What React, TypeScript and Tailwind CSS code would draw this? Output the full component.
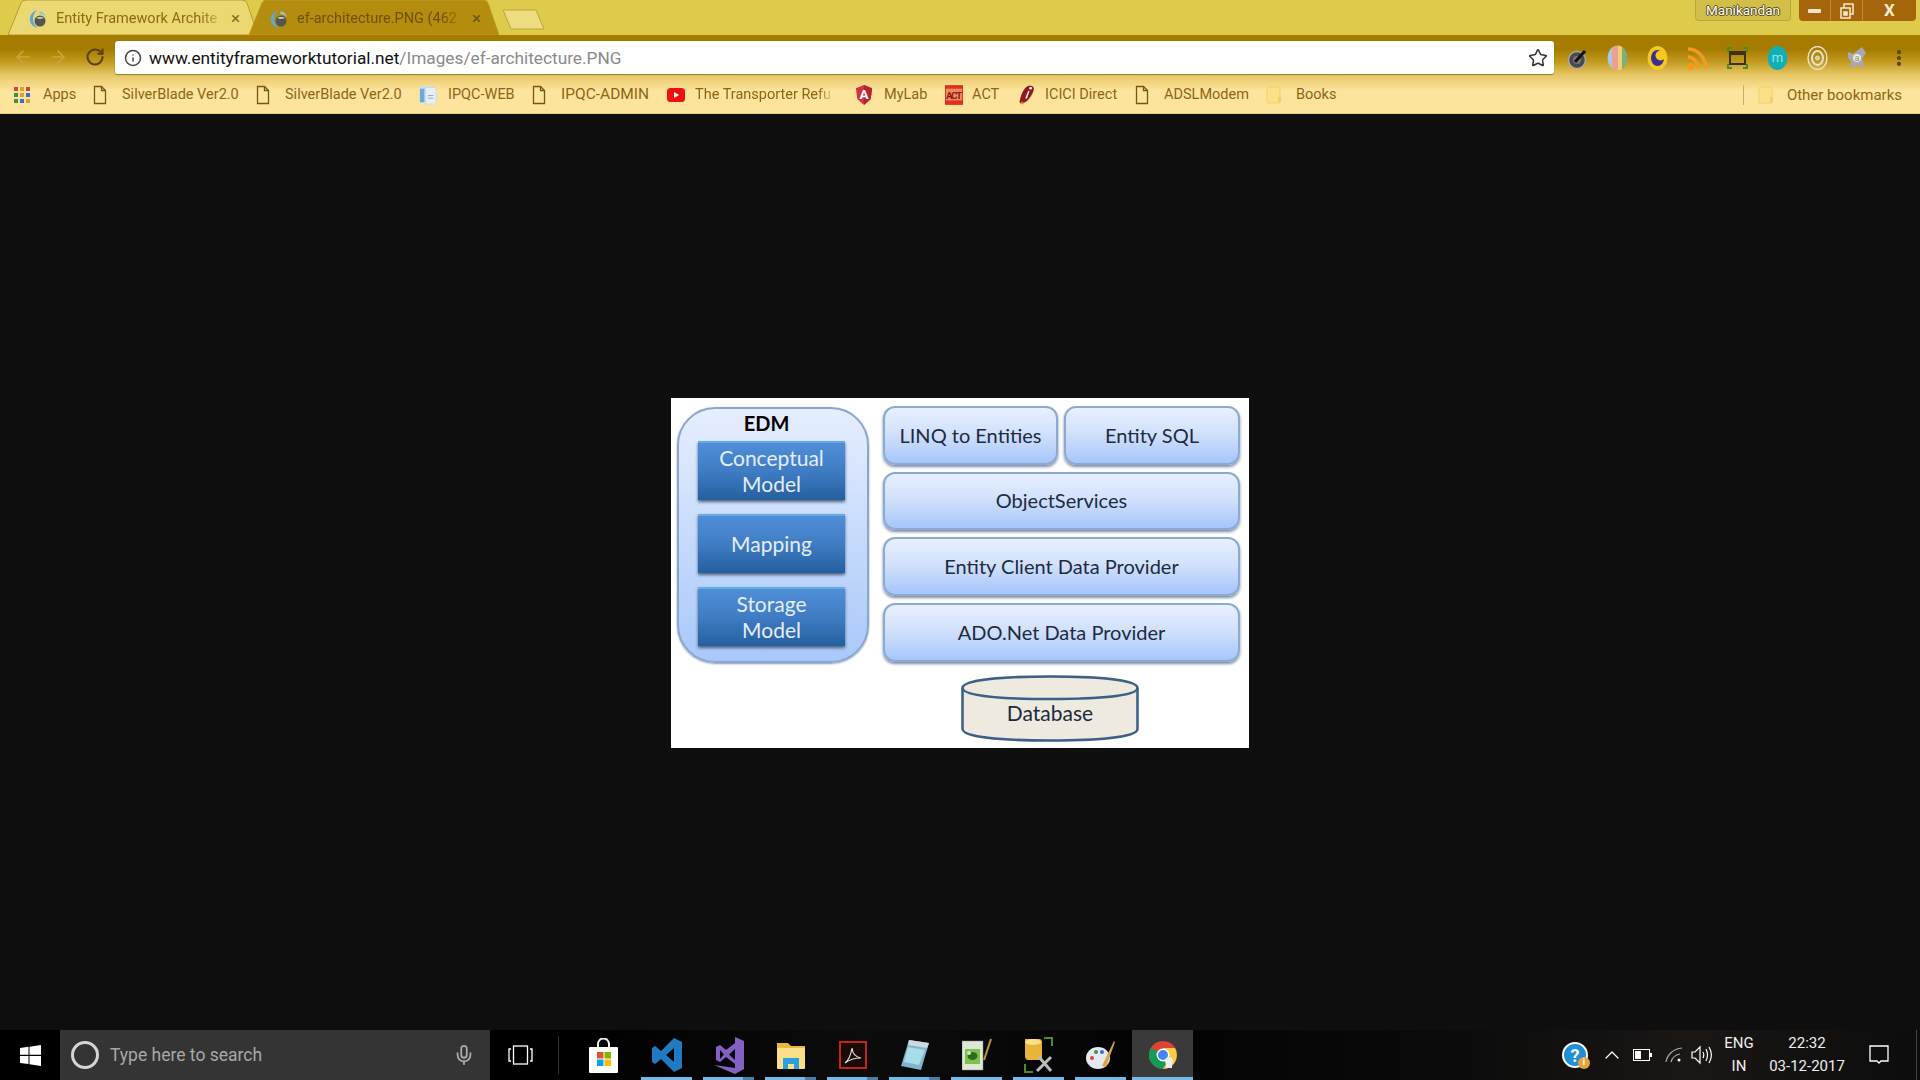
import { ArrowLeft, ArrowRight, RotateCw, Info, Star, Mic, ChevronUp, MoreVertical } from 'lucide-react'

const uiFont = 'font-["Roboto","Liberation_Sans",sans-serif]'
const diagramFont = 'font-["Lato","Noto_Sans",sans-serif]'

function Favicon() {
  return (
    <svg width="20" height="20" viewBox="0 0 20 20" className="shrink-0">
      <path d="M9 1C4 3 1 7 2 12c1 4 4 6 8 7-3-2-5-5-5-9 0-4 2-7 4-9z" fill="#5aa9d6" />
      <path d="M12 2c3 1 5 3 6 6-2-2-4-3-7-3z" fill="#8cc7e8" />
      <circle cx="12" cy="12" r="5.5" fill="#55544f" />
      <path d="M8 9c2-1.500 6-1.500 8 0-2 1-6 1-8 0z" fill="#d9d6c8" />
    </svg>
  )
}

function TabShape({ fill }: { fill: string }) {
  return (
    <svg width="250" height="35" viewBox="0 0 250 35" className="absolute inset-0">
      <path d="M0 35 L13 3 Q14 0 18 0 L234 0 Q238 0 239 3 L250 35 Z" fill={fill} stroke="#b69a2c" strokeWidth="1" />
    </svg>
  )
}

function Tab({ title, fill, text }: { title: string; fill: string; text: string }) {
  return (
    <div className="relative w-[250px] h-[35px] shrink-0 -mr-[9px] first:ml-[8px]">
      <TabShape fill={fill} />
      <div className="relative flex items-center h-full pl-[20px] pt-[2px]">
        <Favicon />
        <span className={`ml-[8px] w-[170px] whitespace-nowrap text-[14.5px] [mask-image:linear-gradient(90deg,#000_85%,transparent)] ${text} ${uiFont}`}>
          {title}
        </span>
        <span className={`ml-[5px] text-[17px] ${text} ${uiFont}`}>×</span>
      </div>
    </div>
  )
}

function DocIcon() {
  return (
    <svg width="16" height="20" viewBox="0 0 16 20" fill="none" stroke="#7a5510" strokeWidth="1.300">
      <path d="M2.500 1.500h7l4 4v13h-11z" />
      <path d="M9.500 1.500v4h4" />
    </svg>
  )
}

function FolderIcon() {
  return (
    <svg width="16" height="20" viewBox="0 0 16 20">
      <rect x="1" y="2" width="13" height="16" rx="1" fill="#fbe08a" stroke="#f4cf5e" />
      <rect x="12" y="12" width="3" height="5" fill="#f4cf5e" />
    </svg>
  )
}

function AppsIcon() {
  const colors = ['#d9432f', '#e0a030', '#d9432f', '#3a8f4a', '#e0a030', '#3a6fd0', '#3a8f4a', '#3a6fd0', '#e0a030']
  return (
    <div className="grid grid-cols-3 gap-[2px] w-[17px]">
      {colors.map((c, i) => (
        <svg key={i} width="4" height="4"><rect width="4" height="4" fill={c} /></svg>
      ))}
    </div>
  )
}

function PagesIcon() {
  return (
    <svg width="20" height="22" viewBox="0 0 20 22">
      <rect x="1" y="1" width="12" height="19" fill="#cfe0f0" />
      <rect x="7" y="3" width="12" height="18" fill="#e8eef5" stroke="#b9c8d8" strokeWidth="0.500" />
      <rect x="1" y="4" width="5" height="15" fill="#6ea9dc" />
      <rect x="10" y="11" width="6" height="1" fill="#90a8c0" />
      <rect x="10" y="14" width="6" height="1" fill="#90a8c0" />
    </svg>
  )
}

function YoutubeIcon() {
  return (
    <svg width="18" height="14" viewBox="0 0 18 14">
      <rect width="18" height="14" rx="3.500" fill="#f01010" />
      <path d="M7 4l5 3-5 3z" fill="#fff" />
    </svg>
  )
}

function AngularIcon() {
  return (
    <svg width="20" height="22" viewBox="0 0 20 22">
      <path d="M10 0L1 3.500l1.500 12L10 22l7.500-6.500 1.500-12z" fill="#d2333c" />
      <path d="M10 0v22l7.500-6.500 1.500-12z" fill="#b3262f" />
      <text x="10" y="16" textAnchor="middle" fontSize="15" fontWeight="700" fill="#fff" fontFamily="Roboto, sans-serif">A</text>
    </svg>
  )
}

function ActIcon() {
  return (
    <svg width="20" height="22" viewBox="0 0 20 22">
      <rect width="20" height="22" fill="#e03020" />
      <rect x="1" y="4" width="18" height="13" fill="#fde49d" opacity="0.500" />
      <text x="10" y="15.500" textAnchor="middle" fontSize="11" fontWeight="700" fill="#8a1a10" fontFamily="Roboto, sans-serif" textLength="18">ACT</text>
    </svg>
  )
}

function IciciIcon() {
  return (
    <svg width="20" height="22" viewBox="0 0 20 22">
      <path d="M11 1c5-1 8 1 6 6-2 5-6 11-11 13-3 1-5 0-4-3 1-5 4-14 9-16z" fill="#8e1a1a" />
      <path d="M7 20c-1 1-3 2-4 1l1-3z" fill="#e8862a" />
      <path d="M11 7l2-1-3 9H8z" fill="#fff" />
      <circle cx="14" cy="3.500" r="1.500" fill="#fff" />
    </svg>
  )
}

const bookmarks = [
  { label: 'Apps', icon: <AppsIcon />, cls: 'w-[78px]', textCls: 'ml-[12px]' },
  { label: 'SilverBlade Ver2.0', icon: <DocIcon />, cls: 'w-[163px]', textCls: 'ml-[13px]' },
  { label: 'SilverBlade Ver2.0', icon: <DocIcon />, cls: 'w-[165px]', textCls: 'ml-[13px]' },
  { label: 'IPQC-WEB', icon: <PagesIcon />, cls: 'w-[111px]', textCls: 'ml-[11px]' },
  { label: 'IPQC-ADMIN', icon: <DocIcon />, cls: 'w-[137px]', textCls: 'ml-[13px] text-[15.500px]' },
  { label: 'The Transporter Refu', icon: <YoutubeIcon />, cls: 'w-[188px]', textCls: 'ml-[10px] w-[140px] [mask-image:linear-gradient(90deg,#000_88%,transparent)]' },
  { label: 'MyLab', icon: <AngularIcon />, cls: 'w-[90px]', textCls: 'ml-[11px]' },
  { label: 'ACT', icon: <ActIcon />, cls: 'w-[73px]', textCls: 'ml-[9px]' },
  { label: 'ICICI Direct', icon: <IciciIcon />, cls: 'w-[115px]', textCls: 'ml-[9px]' },
  { label: 'ADSLModem', icon: <DocIcon />, cls: 'w-[132px]', textCls: 'ml-[13px]' },
  { label: 'Books', icon: <FolderIcon />, cls: 'w-[70px]', textCls: 'ml-[13px]' },
]

function ExtensionIcons() {
  return (
    <div className="flex items-center ml-[13px] gap-[19px]">
      <svg width="21" height="21" viewBox="0 0 21 21">
        <circle cx="10" cy="12" r="8.500" fill="#4a4a4a" stroke="#aaa" strokeWidth="1.500" />
        <circle cx="10" cy="12" r="4" fill="#777" />
        <path d="M8 14L18 3" stroke="#111" strokeWidth="3" />
      </svg>
      <svg width="21" height="26" viewBox="0 0 21 26">
        <clipPath id="ovalclip"><ellipse cx="10.500" cy="13" rx="10" ry="12.500" /></clipPath>
        <g clipPath="url(#ovalclip)">
          <rect x="0" width="5" height="26" fill="#a8c8e8" />
          <rect x="5" width="6" height="26" fill="#eda090" />
          <rect x="11" width="4" height="26" fill="#f0d070" />
          <rect x="15" width="6" height="26" fill="#7caf80" />
        </g>
      </svg>
      <svg width="21" height="24" viewBox="0 0 21 24">
        <ellipse cx="10.500" cy="12" rx="10" ry="12" fill="#f3ca1f" />
        <ellipse cx="10.500" cy="12" rx="6.500" ry="8" fill="#3b2f8f" />
        <circle cx="13.500" cy="9.500" r="5" fill="#f3ca1f" />
      </svg>
      <svg width="21" height="24" viewBox="0 0 21 24" fill="none" stroke="#f59a1c" strokeWidth="3.500">
        <path d="M1 3c10 0 18 9 18 20" />
        <path d="M1 11c6 0 10 6 10 12" />
        <circle cx="3.500" cy="20.500" r="1.800" fill="#f59a1c" />
      </svg>
      <svg width="21" height="22" viewBox="0 0 21 22" fill="none">
        <rect x="3" y="5" width="15" height="12" stroke="#3d3318" strokeWidth="2" />
        <rect x="3" y="5" width="15" height="3" fill="#3d3318" />
        <path d="M1 5V1h4M16 1h4v4M1 17v4h4M16 21h4v-4" stroke="#4f8a2a" strokeWidth="2" />
      </svg>
      <svg width="21" height="24" viewBox="0 0 21 24">
        <ellipse cx="10.500" cy="12" rx="10" ry="12" fill="#12b0b5" />
        <text x="10.500" y="16" textAnchor="middle" fontSize="13" fill="#8fe8e0" fontFamily="Roboto, sans-serif">m</text>
      </svg>
      <svg width="21" height="24" viewBox="0 0 21 24" fill="none" stroke="#e8e0c8">
        <ellipse cx="10.500" cy="12" rx="9.500" ry="11.500" strokeWidth="1.500" />
        <ellipse cx="10.500" cy="12" rx="5.500" ry="7" strokeWidth="2" />
        <circle cx="10.500" cy="12" r="2" fill="#cfc8b0" />
      </svg>
      <svg width="21" height="24" viewBox="0 0 21 24">
        <path d="M1 6l5 2 9-7 4 6-4 6 3 9-7-3-8 3 1-7-3-3z" fill="#a8a8b4" />
        <circle cx="10" cy="12" r="4" fill="#efe9d6" />
        <text x="10" y="15" textAnchor="middle" fontSize="9" fill="#8a8a96" fontFamily="Roboto, sans-serif">a</text>
      </svg>
      <MoreVertical size={20} className="text-[#57430f] ml-[2px]" strokeWidth={3} />
    </div>
  )
}

function BrowserChrome() {
  return (
    <header className={`shrink-0 ${uiFont}`}>
      <div className="h-[35px] bg-[#dfcb4b] flex relative">
        <Tab title="Entity Framework Archite" fill="#ecd873" text="text-[#8a6a14]" />
        <Tab title="ef-architecture.PNG (462" fill="#b48c0e" text="text-[#6e5208]" />
        <svg width="44" height="21" viewBox="0 0 44 21" className="ml-[12px] mt-[9px]">
          <path d="M1 1h33l8 19H9z" fill="#eedc80" stroke="#bda43a" />
        </svg>
        <div className="ml-auto flex items-start h-[21px]">
          <div className="w-[96px] h-[21px] rounded-b-[4px] border border-t-0 border-[#b8a63f] bg-[#d2bf4a] flex items-center justify-center text-[13.500px] text-white [text-shadow:1px_0_0_#5a4a10,-1px_0_0_#5a4a10,0_1px_0_#5a4a10,0_-1px_0_#5a4a10]">
            Manikandan
          </div>
          <div className="ml-[8px] mr-[4px] w-[117px] h-[21px] rounded-b-[4px] bg-[#a5650a] flex text-white">
            <div className="w-[32px] flex items-center justify-center border-r border-[#c28a30]">
              <div className="w-[13px] h-[4px] bg-[#eee6c8] rounded-[1px]" />
            </div>
            <div className="w-[32px] flex items-center justify-center border-r border-[#c28a30]">
              <svg width="14" height="16" viewBox="0 0 14 16" fill="none" stroke="#f3eccf" strokeWidth="1.500">
                <rect x="1" y="5" width="9" height="10" />
                <path d="M4 5V1h9v10h-3" />
                <rect x="4" y="9" width="3" height="3" fill="#f3eccf" />
              </svg>
            </div>
            <div className="flex-1 flex items-center justify-center text-[17px] font-bold text-[#f3eccf]">X</div>
          </div>
        </div>
      </div>

      <div className="bg-[linear-gradient(#a67c00_0%,#a67c00_18%,#c29a20_34%,#e6c662_50%,#fde49d_70%,#fde49d_100%)]">
        <div className="h-[40px] flex items-end pl-[115px] relative">
          <div className="absolute left-[13px] top-[12px] flex items-center gap-[15px]">
            <ArrowLeft size={20} className="text-[#caa53a]" />
            <ArrowRight size={20} className="text-[#caa53a]" />
            <RotateCw size={20} strokeWidth={2.500} className="text-[#5c430a] ml-[2px]" />
          </div>
          <div className="w-[1439px] h-[34px] bg-white rounded-[3px] border-b border-[#9c8540] flex items-center pl-[9px] pr-[6px] shadow-[0_0_1px_#7a5c00]">
            <Info size={18} className="text-[#444]" />
            <span className="ml-[7px] pt-[2px] text-[17.250px] text-[#8a8a8a] whitespace-nowrap">
              <span className="text-[#111]">www.entityframeworktutorial.net</span>/Images/ef-architecture.PNG
            </span>
            <Star size={20} strokeWidth={1.800} className="ml-auto text-[#333]" />
          </div>
          <div className="self-center mt-[6px]">
            <ExtensionIcons />
          </div>
        </div>
        <div className="h-[39px] pt-[2px] border-b border-[#e6cf88] flex items-center pl-[13px] pr-[18px] text-[14.500px] text-[#8e6414]">
          {bookmarks.map((b, i) => (
            <div key={i} className={`flex items-center shrink-0 ${b.cls}`}>
              <span className="w-[18px] flex justify-center shrink-0">{b.icon}</span>
              <span className={`whitespace-nowrap ${b.textCls}`}>{b.label}</span>
            </div>
          ))}
          <div className="ml-auto flex items-center">
            <div className="w-px h-[20px] bg-[#c8ad62] mr-[14px]" />
            <FolderIcon />
            <span className="ml-[13px] whitespace-nowrap text-[15px]">Other bookmarks</span>
          </div>
        </div>
      </div>
    </header>
  )
}

function LightBox({ label, className = '' }: { label: string; className?: string }) {
  return (
    <div className={`flex items-center justify-center pb-[2px] rounded-[12px] border-2 border-[#8da9cf] bg-[linear-gradient(#e8f0ff,#cfdffc_50%,#a5c5fb)] shadow-[0_2px_3px_#7b8ba5] text-[20px] text-[#1d2b3e] ${className}`}>
      {label}
    </div>
  )
}

function DarkBox({ lines, className = '' }: { lines: string[]; className?: string }) {
  return (
    <div className={`h-[59px] flex flex-col items-center justify-center pb-[1px] border-t-2 border-[#62ade8] bg-[linear-gradient(#4f8fd8,#3f7cc4_50%,#245f9e)] shadow-[0_2px_3px_#4c5f7c] text-[21px] leading-[26px] text-[#e4edf8] ${className}`}>
      {lines.map((l) => (
        <span key={l}>{l}</span>
      ))}
    </div>
  )
}

function Diagram() {
  return (
    <div className={`w-[578px] h-[350px] bg-white flex pl-[6px] ${diagramFont}`}>
      <div className="mt-[9px] w-[192px] h-[256px] rounded-[38px] border-2 border-[#8aa6cd] bg-[linear-gradient(#e6eefe,#a9c8fa)] flex flex-col items-stretch pl-[19px] pr-[22px] shadow-[0_1px_2px_#8a99b0]">
        <div className="h-[32px] flex items-center justify-center pr-[10px] pb-[4px] text-[20px] font-bold text-black">EDM</div>
        <DarkBox lines={['Conceptual', 'Model']} />
        <DarkBox lines={['Mapping']} className="mt-[14px]" />
        <DarkBox lines={['Storage', 'Model']} className="mt-[14px]" />
      </div>
      <div className="ml-[14px] mt-[8px] w-[357px] flex flex-col gap-[7px]">
        <div className="flex gap-[6px]">
          <LightBox label="LINQ to Entities" className="w-[175px] h-[59px]" />
          <LightBox label="Entity SQL" className="w-[176px] h-[59px]" />
        </div>
        <LightBox label="ObjectServices" className="h-[58px]" />
        <LightBox label="Entity Client Data Provider" className="h-[59px]" />
        <LightBox label="ADO.Net Data Provider" className="h-[59px]" />
        <div className="relative ml-[78px] mt-[6px] w-[178px] h-[67px] flex items-center justify-center pt-[9px] text-[21px] text-[#1d2b3e]">
          <svg width="178" height="67" viewBox="0 0 176 67" preserveAspectRatio="none" className="absolute inset-0">
            <path d="M1.500 13 C1.500 5 40 1.500 88 1.500 S174.500 5 174.500 13 V54 C174.500 62 136 65.500 88 65.500 S1.500 62 1.500 54 Z" fill="#eeeae0" stroke="#3b5f86" strokeWidth="2.500" />
            <path d="M1.500 13 C1.500 21 40 24 88 24 S174.500 21 174.500 13" fill="none" stroke="#3b5f86" strokeWidth="2.500" />
          </svg>
          <span className="relative">Database</span>
        </div>
      </div>
    </div>
  )
}

function TaskbarApp({ children, active, split }: { children: React.ReactNode; active?: boolean; split?: boolean }) {
  return (
    <div className={`relative h-[50px] flex items-center justify-center shrink-0 ${active ? 'w-[61px] bg-[#3a3a3a] -ml-[5px]' : 'w-[51px] mr-[11px]'}`}>
      {children}
      <div className="absolute bottom-0 inset-x-0 h-[3px] bg-[#76b9ed] flex justify-end">
        {split && <div className="w-[11px] bg-[#4a7fa8]" />}
      </div>
    </div>
  )
}

function Taskbar() {
  return (
    <footer className={`h-[50px] shrink-0 flex items-center bg-[linear-gradient(90deg,#000_30%,#0c0c0c_45%,#030303_60%,#0a0a0a_75%,#1a1715_88%,#0c0c0c)] text-white ${uiFont}`}>
      <div className="w-[60px] flex justify-center">
        <svg width="21" height="21" viewBox="0 0 21 21" fill="#fff">
          <path d="M0 3l8.500-1.200v8H0zM9.500 1.700L21 0v9.800H9.500zM0 11h8.500v8L0 17.900zM9.500 11H21v10l-11.500-1.700z" />
        </svg>
      </div>
      <div className="w-[430px] h-[50px] bg-[#343434] flex items-center pl-[11px] pr-[15px]">
        <div className="w-[28px] h-[28px] rounded-full border-[3px] border-[#d5d5d5]" />
        <span className="ml-[11px] pt-[1px] text-[17.500px] text-[#a8a8a8]">Type here to search</span>
        <Mic size={22} className="ml-auto text-[#aaa]" />
      </div>
      <div className="w-[60px] flex justify-center">
        <svg width="25" height="20" viewBox="0 0 25 20" fill="none" stroke="#fff" strokeWidth="1.300">
          <rect x="5.500" y="1" width="14" height="18" />
          <path d="M3 4H1v12h2M22 4h2v12h-2" />
        </svg>
      </div>
      <div className="w-px h-[38px] bg-[#333] ml-[8px] mr-[24px]" />
      <div className="w-[40px] flex justify-center mr-[18px]">
        <svg width="29" height="35" viewBox="0 0 29 35">
          <path d="M9 10V6a5.500 5.500 0 0 1 11 0v4" fill="none" stroke="#eee" strokeWidth="2" />
          <rect y="9" width="29" height="26" rx="1" fill="#fff" />
          <rect x="8" y="14" width="6.500" height="6.500" fill="#e8532a" />
          <rect x="15.500" y="14" width="6.500" height="6.500" fill="#7fba00" />
          <rect x="8" y="21.500" width="6.500" height="6.500" fill="#00a4ef" />
          <rect x="15.500" y="21.500" width="6.500" height="6.500" fill="#ffb900" />
        </svg>
      </div>
      <div className="flex items-center">
        <TaskbarApp>
          <svg width="30" height="36" viewBox="0 0 30 36">
            <path d="M22 1l8 4v26l-8 4-13-13-6 5-3-2V11l3-2 6 5zM22 11l-8 7 8 7z" fill="#1f7cc4" fillRule="evenodd" />
          </svg>
        </TaskbarApp>
        <TaskbarApp split>
          <svg width="30" height="38" viewBox="0 0 30 38">
            <path d="M21 1l9 4v28l-9 5L0 29l21 3zM2 11l4-2 6 5 9-7v21l-9-7-6 5-4-2zM6 14v9l4-4.500zM21 13l-6 5.500 6 5.500z" fill="#8661c5" fillRule="evenodd" />
          </svg>
        </TaskbarApp>
        <TaskbarApp split>
          <svg width="28" height="28" viewBox="0 0 28 28">
            <path d="M0 2h11l3 3h14v6H0z" fill="#e8b93c" />
            <rect y="7" width="28" height="21" rx="1" fill="#fbe08a" />
            <path d="M6 28V17h16v11h-5v-5h-6v5z" fill="#2c9fe0" />
          </svg>
        </TaskbarApp>
        <TaskbarApp split>
          <svg width="28" height="28" viewBox="0 0 28 28" fill="none">
            <rect x="1" y="1" width="26" height="26" fill="#1a0a08" stroke="#c0241c" strokeWidth="2" />
            <path d="M6 22c4-3 6-9 7-15 .5 5 3 9 9 10-6 0-11 1-16 5z" stroke="#ddd" strokeWidth="1.200" />
          </svg>
        </TaskbarApp>
        <TaskbarApp split>
          <svg width="28" height="32" viewBox="0 0 28 32">
            <path d="M8 1l20 3-8 27L0 27z" fill="#7fb4cc" />
            <path d="M8 1l20 3-2 5L7 6z" fill="#cfd8dc" />
            <path d="M7 8l17 3-6 15L3 23z" fill="#a8dce8" />
          </svg>
        </TaskbarApp>
        <TaskbarApp>
          <svg width="30" height="34" viewBox="0 0 30 34">
            <rect y="3" width="21" height="29" fill="#dfe8d8" stroke="#888" strokeWidth="0.500" />
            <path d="M3 11h15v15H3z" fill="#7cc24a" />
            <ellipse cx="10.500" cy="18" rx="5" ry="4" fill="#2f6a20" />
            <circle cx="7" cy="15" r="2" fill="#cfe8b0" />
            <path d="M22 22L29 1" stroke="#c29a2a" strokeWidth="2" />
          </svg>
        </TaskbarApp>
        <TaskbarApp>
          <svg width="30" height="36" viewBox="0 0 30 36">
            <path d="M1 2h14c2 0 3 1 3 3v18H4c-2 0-3-2-3-4z" fill="#eab43a" />
            <ellipse cx="9" cy="5" rx="8" ry="3" fill="#fbe08a" />
            <path d="M20 1h8v8M1 27v8h8" fill="none" stroke="#4f8a2a" strokeWidth="2" />
            <path d="M13 34l14-14M15 20l12 14" stroke="#bbb" strokeWidth="3" />
          </svg>
        </TaskbarApp>
        <TaskbarApp>
          <svg width="30" height="34" viewBox="0 0 30 34">
            <ellipse cx="12" cy="20" rx="12" ry="11" fill="#e4e8f0" />
            <circle cx="6" cy="20" r="2" fill="#d9432f" />
            <circle cx="10" cy="14" r="2" fill="#3a8f4a" />
            <circle cx="16" cy="14" r="2" fill="#3a6fd0" />
            <path d="M16 28L28 3l1 1-9 25z" fill="#d9a441" />
          </svg>
        </TaskbarApp>
        <TaskbarApp active>
          <svg width="28" height="28" viewBox="0 0 28 28">
            <circle cx="14" cy="14" r="14" fill="#db4437" />
            <path d="M14 14L1.900 7A14 14 0 0 0 14 28l7-12z" fill="#0f9d58" />
            <path d="M14 14l7 2-7 12A14 14 0 0 0 26 7H14z" fill="#ffcd40" />
            <circle cx="14" cy="14" r="6.500" fill="#fff" />
            <circle cx="14" cy="14" r="5" fill="#4285f4" />
            <circle cx="20" cy="20" r="4" fill="#eee" />
            <rect x="17" y="21" width="6" height="6" fill="#eee" />
          </svg>
        </TaskbarApp>
      </div>
      <div className="ml-auto flex items-center h-full">
        <div className="relative w-[26px] h-[26px] rounded-full bg-[#1f8fd6] border-2 border-white flex items-center justify-center text-[18px] font-bold text-white">
          ?
          <div className="absolute -right-[4px] -bottom-[3px] w-[12px] h-[12px] rounded-full bg-[#e8a33a] text-[9px] flex items-center justify-center">i</div>
        </div>
        <ChevronUp size={24} strokeWidth={1.300} className="ml-[12px] text-white" />
        <svg width="20" height="12" viewBox="0 0 20 12" className="ml-[9px]" fill="none">
          <rect x="0.500" y="0.500" width="16" height="11" stroke="#fff" />
          <rect x="2" y="2" width="6" height="8" fill="#fff" />
          <rect x="17" y="4" width="2" height="4" fill="#fff" />
        </svg>
        <svg width="20" height="16" viewBox="0 0 20 16" fill="none" stroke="#aaa" strokeWidth="1.200" className="ml-[12px]">
          <path d="M1 15C2 8 8 2 17 1M6 15c1-4 4-7 9-8" />
          <circle cx="14" cy="13" r="1.500" fill="#fff" stroke="none" />
        </svg>
        <svg width="22" height="20" viewBox="0 0 22 20" fill="none" stroke="#fff" strokeWidth="1.200" className="ml-[6px]">
          <path d="M1 7h3l5-5v16l-5-5H1zM12 7c1 2 1 4 0 6M15 4c2 4 2 8 0 12M18 2c3 5 3 11 0 16" />
        </svg>
        <div className="ml-[9px] w-[34px] text-[15px] leading-[23px] text-center text-[#eee]">
          <div>ENG</div>
          <div>IN</div>
        </div>
        <div className="ml-[13px] w-[76px] text-[15px] leading-[23px] text-center text-[#eee]">
          <div>22:32</div>
          <div className="whitespace-nowrap">03-12-2017</div>
        </div>
        <svg width="20" height="20" viewBox="0 0 20 20" fill="none" stroke="#fff" strokeWidth="1.300" className="ml-[24px] mr-[31px]">
          <path d="M1 1h18v15h-7l-2 2-2-2H1z" />
        </svg>
        <div className="w-px h-full bg-[#444] -ml-[4px] mr-[3px]" />
      </div>
    </footer>
  )
}

export default function App() {
  return (
    <div className="relative h-[1080px] w-[1920px] overflow-hidden flex flex-col bg-[#0e0e0e]">
      <BrowserChrome />
      <main className="flex-1 flex items-center justify-center pt-[2px]">
        <Diagram />
      </main>
      <Taskbar />
    </div>
  )
}
